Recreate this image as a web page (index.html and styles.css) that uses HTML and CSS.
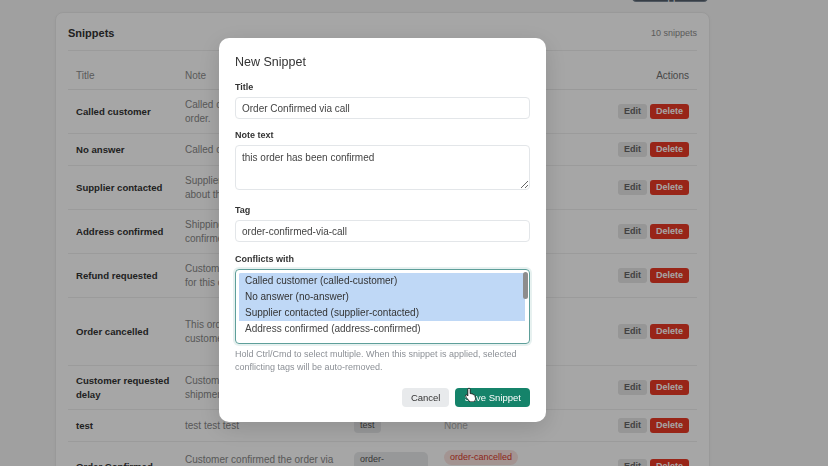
FILE: index.html
```html
<!DOCTYPE html>
<html lang="en">

<head>
    <meta charset="UTF-8">
    <meta name="viewport" content="width=device-width, initial-scale=1.0">
    <title>Snippets</title>
    <link rel="stylesheet" href="styles.css">
</head>

<body>
    <div class="page">
        <div class="topbar">
            <button class="btn-dark">+ New Snippet</button>
        </div>

        <div class="card">
            <div class="card-head">
                <h2>Snippets</h2>
                <span class="count">10 snippets</span>
            </div>

            <table class="snippets">
                <colgroup>
                    <col class="col-title">
                    <col class="col-note">
                    <col class="col-tag">
                    <col class="col-conflicts">
                    <col class="col-actions">
                </colgroup>
                <thead>
                    <tr>
                        <th>Title</th>
                        <th>Note</th>
                        <th>Tag</th>
                        <th>Conflicts with</th>
                        <th class="actions">Actions</th>
                    </tr>
                </thead>
                <tbody>
                    <tr>
                        <td class="title">Called customer</td>
                        <td class="note">Called customer to confirm the<br>order.</td>
                        <td><span class="tag">called-customer</span></td>
                        <td><span class="none">None</span></td>
                        <td class="actions"><button class="btn-edit">Edit</button><button class="btn-delete">Delete</button></td>
                    </tr>
                    <tr>
                        <td class="title">No answer</td>
                        <td class="note">Called customer, no answer.</td>
                        <td><span class="tag">no-answer</span></td>
                        <td><span class="none">None</span></td>
                        <td class="actions"><button class="btn-edit">Edit</button><button class="btn-delete">Delete</button></td>
                    </tr>
                    <tr>
                        <td class="title">Supplier contacted</td>
                        <td class="note">Supplier has been contacted<br>about this order.</td>
                        <td><span class="tag">supplier-contacted</span></td>
                        <td><span class="none">None</span></td>
                        <td class="actions"><button class="btn-edit">Edit</button><button class="btn-delete">Delete</button></td>
                    </tr>
                    <tr>
                        <td class="title">Address confirmed</td>
                        <td class="note">Shipping address has been<br>confirmed.</td>
                        <td><span class="tag">address-confirmed</span></td>
                        <td><span class="none">None</span></td>
                        <td class="actions"><button class="btn-edit">Edit</button><button class="btn-delete">Delete</button></td>
                    </tr>
                    <tr>
                        <td class="title">Refund requested</td>
                        <td class="note">Customer requested a refund<br>for this order.</td>
                        <td><span class="tag">refund-requested</span></td>
                        <td><span class="none">None</span></td>
                        <td class="actions"><button class="btn-edit">Edit</button><button class="btn-delete">Delete</button></td>
                    </tr>
                    <tr>
                        <td class="title">Order cancelled</td>
                        <td class="note">This order was cancelled by the<br>customer.</td>
                        <td><span class="tag">order-cancelled</span></td>
                        <td>
                            <div class="conflicts">
                                <span class="conflict">called-customer</span>
                                <span class="conflict">address-confirmed</span>
                                <span class="conflict">refund-requested</span>
                            </div>
                        </td>
                        <td class="actions"><button class="btn-edit">Edit</button><button class="btn-delete">Delete</button></td>
                    </tr>
                    <tr>
                        <td class="title">Customer requested<br>delay</td>
                        <td class="note">Customer asked to delay the<br>shipment.</td>
                        <td><span class="tag">delay-requested</span></td>
                        <td><span class="none">None</span></td>
                        <td class="actions"><button class="btn-edit">Edit</button><button class="btn-delete">Delete</button></td>
                    </tr>
                    <tr>
                        <td class="title">test</td>
                        <td class="note">test test test</td>
                        <td><span class="tag">test</span></td>
                        <td><span class="none">None</span></td>
                        <td class="actions"><button class="btn-edit">Edit</button><button class="btn-delete">Delete</button></td>
                    </tr>
                    <tr>
                        <td class="title">Order Confirmed</td>
                        <td class="note">Customer confirmed the order via<br>phone.</td>
                        <td><span class="tag tag-wide">order-confirmed</span></td>
                        <td>
                            <div class="conflicts">
                                <span class="conflict">order-cancelled</span>
                                <span class="conflict">refund-requested</span>
                            </div>
                        </td>
                        <td class="actions"><button class="btn-edit">Edit</button><button class="btn-delete">Delete</button></td>
                    </tr>
                </tbody>
            </table>
        </div>
    </div>

    <div class="backdrop">
        <div class="modal">
            <h3>New Snippet</h3>

            <div class="field">
                <label for="title">Title</label>
                <input type="text" id="title" value="Order Confirmed via call">
            </div>

            <div class="field field-note">
                <label for="note">Note text</label>
                <textarea id="note">this order has been confirmed</textarea>
            </div>

            <div class="field field-tag">
                <label for="tag">Tag</label>
                <input type="text" id="tag" value="order-confirmed-via-call">
            </div>

            <div class="field field-last">
                <label for="conflicts">Conflicts with</label>
                <div class="listbox">
                    <select id="conflicts" multiple>
                        <option selected>Called customer (called-customer)</option>
                        <option selected>No answer (no-answer)</option>
                        <option selected>Supplier contacted (supplier-contacted)</option>
                        <option>Address confirmed (address-confirmed)</option>
                        <option>Refund requested (refund-requested)</option>
                        <option>Order cancelled (order-cancelled)</option>
                        <option>Customer requested delay (delay-requested)</option>
                        <option>test (test)</option>
                        <option>Order Confirmed (order-confirmed)</option>
                        <option>Out of stock (out-of-stock)</option>
                    </select>
                    <span class="scroll-thumb"></span>
                </div>
                <p class="hint">Hold Ctrl/Cmd to select multiple. When this snippet is applied, selected
                    conflicting tags will be auto-removed.</p>
            </div>

            <div class="modal-actions">
                <button class="btn-cancel">Cancel</button>
                <button class="btn-save">Save Snippet</button>
            </div>

            <svg class="cursor" width="12" height="15" viewBox="0 0 12 15">
                <path d="M4 1.2c.7 0 1.2.5 1.2 1.2v4.3l.2-.1c.6-.3 1.3 0 1.5.5.5-.3 1.2-.1 1.5.5.6-.2 1.2.1 1.4.7l.6 2.4c.3 1.2 0 2.4-.8 3.300l-.8.9H4.9L2 11.4c-.5-.6-1-1.3-1.2-2.1l-.2-.7c-.1-.5.3-.9.8-.8.4.1.8.4 1.100.8l.3.4V2.4c0-.7.5-1.200 1.2-1.2z" fill="#fff" stroke="#111" stroke-width="0.9" stroke-linejoin="round"/>
            </svg>
        </div>
    </div>
</body>

</html>
```

FILE: styles.css
```css
body {
    margin: 0;
    font-family: "Liberation Sans", Arial, sans-serif;
    background-color: #f6f6f6;
    color: #333;
}

.page {
    width: 655px;
    margin: -22px 0 0 55px;
}

.topbar {
    display: flex;
    justify-content: flex-end;
    height: 24px;
    padding-right: 2px;
}

.btn-dark {
    width: 76px;
    height: 24px;
    border: 1px solid #7a8694;
    border-radius: 4px;
    background: #55606c;
    color: white;
    font: inherit;
    font-size: 10px;
}

.card {
    margin-top: 10px;
    background: white;
    border: 1px solid #ececec;
    border-radius: 8px;
    padding: 0 12px 20px;
    box-shadow: 0 1px 3px rgba(0, 0, 0, 0.04);
}

.card-head {
    display: flex;
    justify-content: space-between;
    align-items: center;
    padding: 13px 0 10px;
    border-bottom: 1px solid #eeeeee;
}

.card-head h2 {
    margin: 0;
    font-size: 11px;
    line-height: 14px;
    font-weight: bold;
    color: #333;
}

.count {
    font-size: 9px;
    color: #8c8c8c;
}

.snippets {
    width: 100%;
    margin-top: 10px;
    border-spacing: 0;
    table-layout: fixed;
    font-size: 10px;
}

.col-title { width: 109px; }
.col-note { width: 169px; }
.col-tag { width: 90px; }
.col-conflicts { width: 144px; }

.snippets th {
    padding: 9px 8px 7px;
    line-height: 12px;
    text-align: left;
    font-weight: normal;
    color: #8c8c8c;
    border-bottom: 1px solid #ebebeb;
}

.snippets td {
    padding: 8px;
    line-height: 13.5px;
    vertical-align: middle;
    border-bottom: 1px solid #efefef;
}

.snippets .actions {
    text-align: right;
    white-space: nowrap;
}

.snippets th.actions {
    color: #707070;
}

td.title {
    font-size: 9.6px;
    font-weight: bold;
    color: #333;
    white-space: nowrap;
}

td.note {
    color: #888;
    white-space: nowrap;
    overflow: hidden;
}

.tag {
    display: inline-block;
    padding: 1px 6px;
    font-size: 9px;
    line-height: 13px;
    border-radius: 4px;
    background: #e9eaec;
    color: #555;
    white-space: nowrap;
}

.tag-wide {
    display: block;
    padding: 1px 6px 2px;
    border-radius: 5px;
    white-space: normal;
}

.none {
    color: #b0b0b0;
}

.conflicts {
    display: flex;
    flex-direction: column;
    align-items: flex-start;
    gap: 3px;
}

.conflict {
    padding: 1px 6px;
    font-size: 9px;
    line-height: 13px;
    border-radius: 8px;
    background: #fbe4e1;
    color: #d8372a;
    white-space: nowrap;
}

.btn-edit,
.btn-delete {
    height: 15px;
    padding: 0 6px;
    border: none;
    border-radius: 3px;
    font: inherit;
    font-size: 9px;
    font-weight: bold;
    vertical-align: middle;
}

.btn-edit {
    background: #e6e6e6;
    color: #666;
    margin-right: 3px;
}

.btn-delete {
    background: #ea3a26;
    color: #fff;
}

/* modal */

.backdrop {
    position: fixed;
    inset: 0;
    background: rgba(0, 0, 0, 0.35);
}

.modal {
    position: absolute;
    left: 219px;
    top: 38px;
    width: 327px;
    box-sizing: border-box;
    padding: 17px 16px 15px;
    background: white;
    border-radius: 10px;
    box-shadow: 0 6px 24px rgba(0, 0, 0, 0.15);
}

.modal h3 {
    margin: 0 0 12px;
    font-size: 12.5px;
    line-height: 14px;
    font-weight: normal;
    color: #333;
}

.field {
    margin-bottom: 10px;
}

.field-note {
    margin-bottom: 14px;
}

.field-tag {
    margin-bottom: 11px;
}

.field label {
    display: block;
    margin-bottom: 4px;
    font-size: 9px;
    line-height: 12px;
    font-weight: bold;
    color: #333;
}

.field input,
.field textarea {
    display: block;
    width: 100%;
    box-sizing: border-box;
    border: 1px solid #e3e6e9;
    border-radius: 4px;
    padding: 0 6px;
    font: inherit;
    font-size: 10px;
    color: #444;
    background: white;
}

.field input {
    height: 22px;
}

.field textarea {
    height: 45px;
    padding-top: 5px;
    line-height: 13px;
    resize: vertical;
}

.listbox {
    position: relative;
    padding: 3px 4px 4px 3px;
    border: 1px solid #5e9f9a;
    border-radius: 4px;
    box-shadow: 0 0 0 2px rgba(94, 159, 154, 0.15);
}

.listbox select {
    display: block;
    width: 100%;
    height: 66px;
    padding: 0;
    border: none;
    font: inherit;
    font-size: 10px;
    color: #444;
    outline: none;
    overflow: hidden;
}

.listbox option {
    padding: 2px 6px;
    line-height: 12.5px;
}

.listbox option:checked {
    background: #bfd8f6 linear-gradient(#bfd8f6, #bfd8f6);
    color: #333;
}

.scroll-thumb {
    position: absolute;
    top: 2px;
    right: 1px;
    width: 5px;
    height: 27px;
    border-radius: 3px;
    background: #8d8d8d;
}

.field-last {
    margin-bottom: 0;
}

.hint {
    margin: 4px 0 0;
    font-size: 9px;
    line-height: 13px;
    color: #8c9096;
}

.modal-actions {
    display: flex;
    justify-content: flex-end;
    gap: 6px;
    margin-top: 14px;
}

.btn-cancel,
.btn-save {
    height: 19px;
    padding: 0 9px;
    border: none;
    border-radius: 4px;
    font: inherit;
    font-size: 9.5px;
}

.btn-cancel {
    background: #e8eaec;
    color: #333;
}

.btn-save {
    background: #15836a;
    color: white;
}

.cursor {
    position: absolute;
    left: 246px;
    top: 349px;
}
```
